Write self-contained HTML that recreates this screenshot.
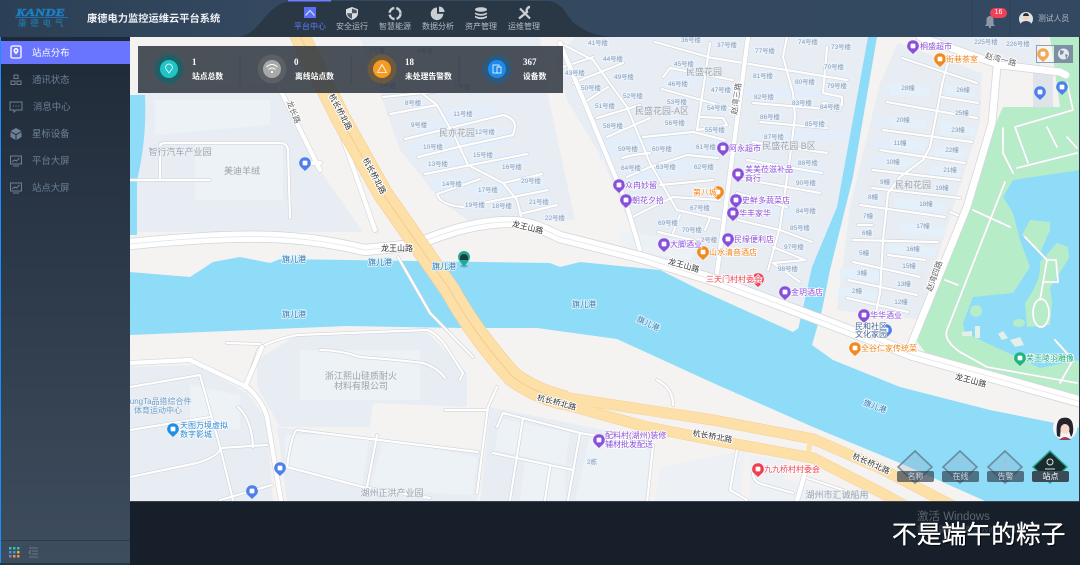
<!DOCTYPE html>
<html lang="zh-CN"><head><meta charset="utf-8"><title>康德电力监控运维云平台系统</title>
<style>
*{box-sizing:border-box;margin:0;padding:0}
html,body{width:1080px;height:565px;overflow:hidden;background:#161f2a;font-family:"Liberation Sans","Noto Sans CJK SC",sans-serif}
.a{position:absolute}
#hd{left:0;top:0;width:1080px;height:37px;background:#31465e;border-top:1px solid #1d2733}
#sb{left:0;top:37px;width:130px;height:526px;background:linear-gradient(#1f2a38,#3e4d5e);border-left:1px solid #1890ff}
.it{position:absolute;left:0;width:129px;height:24px;line-height:24px;font-size:9.4px;color:#6c8096;padding-left:31px}
.it svg{position:absolute;left:8px;top:5px}
.nav{position:absolute;top:21px;width:40px;text-align:center;font-size:8px;line-height:10px;color:#b4bbc5}
.st{position:absolute;color:#fff;font-weight:bold;white-space:nowrap}
.n{font-family:"Liberation Serif",serif;font-size:9px;top:57px}
.l{font-size:7.8px;top:71px}
.tag{position:absolute;top:471px;width:37px;height:11px;background:rgba(48,62,76,.68);border-radius:2px;color:#c9d3dc;font-size:8px;line-height:11px;text-align:center}
text{font-family:"Liberation Sans","Noto Sans CJK SC",sans-serif}
.b{font-size:6.4px;fill:#8799b3;stroke:#eaf3fc;stroke-width:2.4px;paint-order:stroke;text-anchor:middle}
.g{font-size:9px;fill:#9aa3ad;stroke:#eef2f6;stroke-width:1.5px;paint-order:stroke;text-anchor:middle}
.w{font-size:8px;fill:#3f77ad;stroke:#d8f3fd;stroke-width:1.8px;paint-order:stroke;text-anchor:middle}
.r{font-size:8px;fill:#333;stroke:#fff;stroke-width:1.8px;paint-order:stroke;text-anchor:middle}
.pu{font-size:8px;fill:#8a4fd8;stroke:#fff;stroke-width:1.5px;paint-order:stroke}
.or{font-size:8px;fill:#ef8418;stroke:#fff;stroke-width:1.5px;paint-order:stroke}
.re{font-size:8px;fill:#ef3f4f;stroke:#fff;stroke-width:1.5px;paint-order:stroke}
.bl{font-size:8px;fill:#2b86d0;stroke:#fff;stroke-width:1.5px;paint-order:stroke}
</style></head><body>

<svg class="a" style="left:130px;top:37px" width="950" height="464" viewBox="130 37 950 464">
<defs>
<g id="pin"><path d="M0,-5.8a5.8,5.8 0 0 1 4.1,9.9L0,8L-4.1,4.1A5.8,5.8 0 0 1 0,-5.8z"/><rect x="-2.4" y="-2.4" width="4.8" height="4.8" rx="1" fill="#fff"/></g>
<g id="thin" fill="none">
<path d="M130,180H210M160,180V147Q160,143 165,143H280Q287,143 288,150L290,218M363,200L377,232"/>
<path d="M130,387L200,375L220,447Q222,455 197,463L130,477M130,430L210,417M220,448L267,445M238,407Q252,420 253,447M220,500L272,485"/>
<path d="M245,387L258,350Q265,342 297,335L427,330Q435,332 445,345L463,373L460,380M320,350Q340,350 360,357Q400,360 423,363Q438,368 445,378M227,343L260,344"/>
<path d="M398,257L430,313L473,357"/>
<path d="M478,452L297,430Q292,432 287,467L363,487L430,498M377,435L367,487M497,387L488,407L477,493M445,410H488"/>
<path d="M497,427L503,413L580,433L653,445L647,503M523,418L510,500M493,453L573,470M580,433L568,500M550,467L545,500"/>
<path d="M220,447L233,500M737,450L730,490L747,500M753,473Q753,483 765,485L793,493M807,478L843,490M657,380Q673,388 673,405"/>
<path d="M383,97L433,92M390,114L437,105M423,94L437,105L455,137L468,165L503,183L517,200L522,220M405,139L503,115Q515,118 515,127L513,135L458,147L418,157M425,174L527,154M503,183L542,174M480,179L437,194Q440,205 463,207L548,190M520,214L557,205"/>
<path d="M560,43L593,60L627,107L650,163L677,210L723,220M560,68L593,57M573,83L623,63M585,102L608,87M597,118L640,105M607,137L650,118M643,137L693,132L725,140M663,77L670,68L733,80M662,89L730,108"/>
<path d="M655,42L712,58M710,43L697,130M700,117L723,118L727,125L697,130M787,37L783,57L793,93L795,117L790,157L780,227L768,270M713,58L847,80M753,103L840,110M760,122L827,128M753,142L827,153M747,160L822,173M737,178L820,193M737,193L787,207M738,220L780,230L812,242M773,247L805,260L773,263M773,263L800,282M827,47L823,93M823,93L842,97L842,105L823,103"/>
<path d="M622,158Q630,155 650,153M627,177L650,167L687,155L718,158M660,185L713,180M632,217L673,197L720,200M710,218L705,230M658,232L693,240M673,233L680,215"/>
<path d="M948,63L943,80L930,147L923,160L900,177L888,193L883,240L880,293L875,317M902,58L977,83M942,97L978,103M887,102L977,118M883,130L972,142M880,150L965,163M873,170L960,180M872,188L960,198M860,205L945,217M858,225H872M853,240L938,242M888,255L925,260M853,262L920,277M848,280L917,295M847,298L908,312M950,212L962,217"/>
</g>
<g id="park" fill="none">
<path d="M1067,83L1073,110L1015,127L1028,163M1003,128L1003,153L1013,173M1017,168L1077,153M1047,127L1057,147M1067,137L1077,148M1005,182L947,330Q943,340 960,352L987,367L1077,383M973,210L1010,227M945,280L958,285M1025,237L1047,260L1040,300M1047,260H1056L1058,282H1044M1055,340L1073,360L1060,383"/>
<ellipse cx="1041" cy="313" rx="8" ry="14"/>
</g>
</defs>

<rect x="130" y="37" width="950" height="464" fill="#f4f3f1"/>
<g fill="#e8edf4">
<path d="M137,90L277,83L320,170L363,232L137,232Z"/>
<path d="M360,37H540L548,95L575,220L470,222L440,200L400,150Z"/>
<path d="M575,37H870L838,207L812,268L802,308L722,278L640,250L603,160L567,100L555,60Z"/>
<path d="M898,43L982,73L980,123L943,240L920,320L837,310L850,207L880,83Z"/>
<path d="M880,37H1040V65L1000,62L920,37Z"/>
<path d="M130,367L197,365L247,393L267,420L273,501H130Z"/>
<path d="M297,335L427,332L467,373V407L373,403L370,427H280L257,387V360Z"/>
<path d="M277,427L483,453L477,501H287Z"/>
<path d="M490,407L653,440L647,501H480Z"/>
<path d="M660,467L745,450L740,501H655ZM750,455L785,460V480L830,490L860,501H750Z" fill="#edf0f4"/>
<path d="M1033,73H1053V113H1033Z" fill="#dfe4ea"/>
</g>
<g fill="#e3effb" opacity=".9">
<path d="M438,109L498,105V116L438,122ZM415,125L470,117V130L415,137ZM410,143L510,130V145L410,158ZM425,160L530,150V163L425,172ZM430,180L470,173V190H430ZM468,186L545,178V195H468Z"/>
<path d="M600,140L690,128V145L600,160ZM625,170L700,158V172L625,185ZM675,145L725,140V155L675,155ZM745,85L835,88V98L745,96ZM750,130L850,130V140L750,140ZM750,160L825,165V178L750,172ZM760,200L800,205V220L760,215ZM668,75L720,72V85L668,88Z"/>
<path d="M885,84L930,88V95L885,95ZM945,85L975,90V97L945,95ZM875,118L925,120V128L875,126ZM940,120L975,128V136L940,134ZM875,138L925,142V150L875,148ZM935,146L965,150V158L935,156ZM870,155L920,160V168L870,165ZM930,165L960,170V178L930,175ZM895,198L945,204V212L895,208ZM900,222L945,228V236L900,232ZM885,245L935,248V256L885,252ZM840,268L880,272V282L840,278ZM838,288L880,292V300L838,298Z"/>
<path d="M620,230L700,245L690,260L620,250ZM190,385L240,395V430L190,420ZM300,350H420V400H300ZM285,435H370L362,485L285,465ZM383,440L478,457L472,495L370,490ZM500,418L570,433L565,465L495,450ZM525,460L565,470V500H520ZM590,435L650,450L645,500H575ZM155,100H270V125L155,135ZM195,145H283V200H195Z" fill="#edf2f7"/>
</g>
<path d="M1003,107H1060L1050,37H1080V397L925,352L916,340L965,220L995,125Z" fill="#b7ecc8"/>
<path d="M1003,197L1013,180L1080,170V360L1040,368L1017,357L965,333L963,323L973,297L1013,293L1030,267L1020,240L1013,213Z" fill="#8fdcf9"/>
<path d="M1030,220L1050,222L1050,230L1040,253L1022,235ZM1057,243L1068,247L1069,258L1050,288L1052,302L1050,325L1027,327L1025,303Q1042,280 1040,262Z" fill="#b7ecc8"/>
<circle cx="976" cy="311" r="6" fill="#b7ecc8"/><ellipse cx="1019" cy="323" rx="6" ry="4" fill="#b7ecc8"/>
<path d="M962,332L972,331V336H962ZM975,326H980V338H975ZM998,334L1003,331L1008,338L1002,340ZM1010,340L1020,337L1024,345L1015,347Z" fill="#e4efe8"/>
<path d="M130,272L190,277L213,262L240,257L270,263L280,259L550,263L560,267L580,262L660,270L700,290L793,332L800,327L812,345L833,360L900,387L990,410L1080,428V501H985L900,463L813,427L713,383L617,339L537,328L463,328L347,326L130,335Z" fill="#8fdcf9"/>
<path d="M868,37L837,207L812,267L798,330L812,345L822,310L830,270L853,177L877,37Z" fill="#8fdcf9"/>
<path d="M130,95H145Q147,140 137,180V235H130Z" fill="#8fdcf9"/>
<g fill="none" stroke-linejoin="round" stroke-linecap="round">
<g stroke="#cfd3d8" stroke-width="3.4"><use href="#thin"/></g>
<g stroke="#fff" stroke-width="2.2"><use href="#thin"/></g>
<g stroke="#d6dce0" stroke-width="2.4"><use href="#park"/></g>
<g stroke="#fff" stroke-width="1.6"><use href="#park"/></g>
<g stroke="#d3d6d8" stroke-width="5.5"><path d="M277,83L320,170M305,163H320M130,363L190,360L247,387Q262,400 267,417L281,501M262,347L245,387M340,130L375,230M748,37L717,273M805,473L797,501M560,43L625,200L640,250"/></g>
<g stroke="#fff" stroke-width="4.3"><path d="M277,83L320,170M305,163H320M130,363L190,360L247,387Q262,400 267,417L281,501M262,347L245,387M340,130L375,230M748,37L717,273M805,473L797,501M560,43L625,200L640,250"/></g>
<g stroke="#d3d6d8" stroke-width="8.5"><path d="M920,37L1000,65L1060,72L1066,75M997,67L992,123L967,207L913,340L909,352"/></g>
<g stroke="#fff" stroke-width="7"><path d="M920,37L1000,65L1060,72L1066,75M997,67L992,123L967,207L913,340L909,352"/></g>
<g stroke="#d1d4d8" stroke-width="12"><path d="M130,244C250,232 300,235 365,250L415,245C450,230 480,222 510,222C530,222 545,230 560,237L643,258L720,282L800,312L913,355L1085,403"/></g>
<g stroke="#fff" stroke-width="10.5"><path d="M130,244C250,232 300,235 365,250L415,245C450,230 480,222 510,222C530,222 545,230 560,237L643,258L720,282L800,312L913,355L1085,403"/></g>
<path d="M130,244C250,232 300,235 365,250L415,245C450,230 480,222 510,222C530,222 545,230 560,237L643,258L720,282L800,312L913,355L1085,403" stroke="#dfe2e5" stroke-width=".7"/>
<g stroke="#f6cc92" stroke-width="20"><path d="M297,30L340,117L383,194L450,290Q475,335 513,377Q535,393 563,400"/></g>
<g stroke="#f6cc92" stroke-width="11"><path d="M563,397L647,410L713,420L813,439L880,468L970,515M563,404L647,427L713,440L813,458L880,492L930,520"/></g>
<g stroke="#fde0a8" stroke-width="18.800"><path d="M297,30L340,117L383,194L450,290Q475,335 513,377Q535,393 563,400"/></g>
<g stroke="#fde0a8" stroke-width="10"><path d="M563,397L647,410L713,420L813,439L880,468L970,515M563,404L647,427L713,440L813,458L880,492L930,520"/></g>
<path d="M297,30L340,117L383,194L450,290Q475,335 513,377Q535,393 563,400" stroke="#f5c689" stroke-width=".8"/>
<path d="M810,441L808,456" stroke="#fde0a8" stroke-width="5"/>
</g>

<text class="g" x="180" y="155">智行汽车产业园</text><text class="g" x="242" y="174">美迪羊绒</text>
<text class="g" x="457" y="136">民亦花园</text><text class="g" x="704" y="75">民盛花园</text><text class="g" x="662" y="114">民盛花园-A区</text><text class="g" x="789" y="149">民盛花园 B区</text><text class="g" x="913" y="188">民和花园</text>
<text class="g" x="361" y="379">浙江熙山硅质耐火</text><text class="g" x="361" y="389">材料有限公司</text>
<text class="g" x="392" y="496">湖州正洪产业园</text><text class="g" x="837" y="498">湖州市汇诚船用</text>
<text class="g" style="font-size:8px;fill:#6fa0c8" x="158" y="404">KungTa品搭综合件</text><text class="g" style="font-size:8px;fill:#6fa0c8" x="158" y="413">体育运动中心</text>

<g>
<text class="b" x="377" y="52">1号楼</text><text class="b" x="425" y="53">4号楼</text><text class="b" x="388" y="88">5号楼</text><text class="b" x="462" y="89">7号楼</text><text class="b" x="413" y="105">8号楼</text><text class="b" x="419" y="127">9号楼</text><text class="b" x="463" y="116">11号楼</text><text class="b" x="485" y="134">12号楼</text><text class="b" x="433" y="149">10号楼</text><text class="b" x="483" y="157">15号楼</text><text class="b" x="438" y="166">13号楼</text><text class="b" x="512" y="169">16号楼</text><text class="b" x="452" y="186">14号楼</text><text class="b" x="488" y="192">17号楼</text><text class="b" x="531" y="183">20号楼</text><text class="b" x="475" y="207">19号楼</text><text class="b" x="502" y="208">18号楼</text><text class="b" x="539" y="204">21号楼</text><text class="b" x="555" y="220">22号楼</text>
<text class="b" x="598" y="45">41号楼</text><text class="b" x="613" y="61">44号楼</text><text class="b" x="575" y="75">43号楼</text><text class="b" x="624" y="79">49号楼</text><text class="b" x="591" y="90">50号楼</text><text class="b" x="633" y="98">52号楼</text><text class="b" x="605" y="108">51号楼</text><text class="b" x="677" y="104">53号楼</text><text class="b" x="613" y="128">58号楼</text><text class="b" x="675" y="125">56号楼</text><text class="b" x="717" y="110">54号楼</text><text class="b" x="715" y="132">55号楼</text><text class="b" x="684" y="66">45号楼</text><text class="b" x="678" y="86">46号楼</text><text class="b" x="721" y="92">47号楼</text><text class="b" x="691" y="42">36号楼</text><text class="b" x="727" y="47">37号楼</text><text class="b" x="765" y="53">77号楼</text><text class="b" x="808" y="44">74号楼</text><text class="b" x="841" y="49">73号楼</text><text class="b" x="834" y="69">70号楼</text><text class="b" x="763" y="78">81号楼</text><text class="b" x="805" y="84">80号楼</text><text class="b" x="837" y="88">79号楼</text><text class="b" x="764" y="99">82号楼</text><text class="b" x="802" y="105">83号楼</text><text class="b" x="830" y="109">84号楼</text><text class="b" x="770" y="119">86号楼</text><text class="b" x="815" y="126">85号楼</text><text class="b" x="774" y="139">87号楼</text><text class="b" x="628" y="151">59号楼</text><text class="b" x="662" y="151">60号楼</text><text class="b" x="706" y="149">61号楼</text><text class="b" x="631" y="170">64号楼</text><text class="b" x="666" y="169">63号楼</text><text class="b" x="704" y="169">62号楼</text><text class="b" x="808" y="165">88号楼</text><text class="b" x="806" y="185">90号楼</text><text class="b" x="806" y="213">84号楼</text><text class="b" x="800" y="230">85号楼</text><text class="b" x="794" y="249">97号楼</text><text class="b" x="788" y="271">98号楼</text><text class="b" x="700" y="210">67号楼</text><text class="b" x="668" y="225">69号楼</text><text class="b" x="692" y="232">70号楼</text><text class="b" x="709" y="242">2号楼</text>
<text class="b" x="986" y="44">225号楼</text><text class="b" x="1018" y="46">226号楼</text>
<text class="b" x="908" y="90">28幢</text><text class="b" x="963" y="92">26幢</text><text class="b" x="962" y="115">25幢</text><text class="b" x="903" y="122">20幢</text><text class="b" x="958" y="132">23幢</text><text class="b" x="900" y="145">11幢</text><text class="b" x="952" y="152">22幢</text><text class="b" x="893" y="164">10幢</text><text class="b" x="950" y="172">21幢</text><text class="b" x="885" y="184">9幢</text><text class="b" x="942" y="190">19幢</text><text class="b" x="873" y="199">8幢</text><text class="b" x="926" y="206">18幢</text><text class="b" x="868" y="218">7幢</text><text class="b" x="923" y="228">17幢</text><text class="b" x="867" y="235">6幢</text><text class="b" x="913" y="251">16幢</text><text class="b" x="864" y="255">5幢</text><text class="b" x="909" y="268">15幢</text><text class="b" x="862" y="275">3幢</text><text class="b" x="904" y="286">13幢</text><text class="b" x="857" y="293">2幢</text><text class="b" x="901" y="304">12幢</text>
<text class="b" x="592" y="464">2栋</text>
</g>

<text class="w" x="294" y="262">旗儿港</text><text class="w" x="380" y="265">旗儿港</text><text class="w" x="444" y="269">旗儿港</text><text class="w" x="294" y="317">旗儿港</text><text class="w" x="584" y="307">旗儿港</text>
<text class="w" transform="translate(647,326) rotate(25)">旗儿港</text><text class="w" transform="translate(874,409) rotate(20)">旗儿港</text>

<text class="r" x="397" y="251">龙王山路</text>
<text class="r" transform="translate(527,230) rotate(14)">龙王山路</text>
<text class="r" transform="translate(683,268) rotate(16)">龙王山路</text>
<text class="r" transform="translate(970,383) rotate(15)">龙王山路</text>
<text class="r" transform="translate(338,113) rotate(62)">杭长桥北路</text>
<text class="r" transform="translate(372,177) rotate(62)">杭长桥北路</text>
<text class="r" transform="translate(556,405) rotate(15)">杭长桥北路</text>
<text class="r" transform="translate(712,439) rotate(10)">杭长桥北路</text>
<text class="r" transform="translate(870,466) rotate(24)">杭长桥北路</text>
<text class="r" transform="translate(291,113) rotate(68)" style="fill:#666">龙长路</text>
<text class="r" transform="translate(739,99) rotate(-82)" style="fill:#666">赵湾三路</text>
<text class="r" transform="translate(1000,62) rotate(15)" style="fill:#666">赵湾一路</text>
<text class="r" transform="translate(937,277) rotate(-70)" style="fill:#666">赵湾四路</text>

<g fill="#8a4fd8">
<use href="#pin" x="913" y="46"/><use href="#pin" x="723" y="148"/><use href="#pin" x="738" y="174"/><use href="#pin" x="619" y="185"/><use href="#pin" x="626" y="200"/><use href="#pin" x="736" y="200"/><use href="#pin" x="733" y="213"/><use href="#pin" x="728" y="239"/><use href="#pin" x="664" y="244"/><use href="#pin" x="785" y="292"/><use href="#pin" x="864" y="315"/><use href="#pin" x="599" y="440"/>
</g>
<g fill="#f08a1d">
<use href="#pin" x="940" y="59"/><use href="#pin" x="718" y="192"/><use href="#pin" x="703" y="252"/><use href="#pin" x="855" y="348"/><use href="#pin" x="1043" y="54"/>
</g>
<g fill="#ef3f4f"><use href="#pin" x="758" y="279"/><use href="#pin" x="758" y="469"/></g>
<g fill="#4f7fe8"><use href="#pin" x="305" y="163"/><use href="#pin" x="280" y="468"/><use href="#pin" x="252" y="491"/><use href="#pin" x="1040" y="92"/><use href="#pin" x="1062" y="87"/><use href="#pin" x="886" y="330"/></g>
<use href="#pin" x="173" y="429" fill="#1e8fe6"/>
<use href="#pin" x="1020" y="358" fill="#1eb482"/>
<text class="pu" x="920" y="49">桐盛超市</text><text class="or" x="946" y="62">街巷茶室</text>
<text class="pu" x="729" y="151">阿永超市</text><text class="pu" x="745" y="172">美美莅滋补品</text><text class="pu" x="745" y="181">商行</text>
<text class="pu" x="625" y="188">众冉妙留</text><text class="pu" x="632" y="203">朝花夕拾</text><text class="or" x="693" y="195">第八城</text>
<text class="pu" x="742" y="203">史鲜多蔬菜店</text><text class="pu" x="739" y="216">华丰家华</text><text class="pu" x="734" y="242">民缘便利店</text><text class="pu" x="670" y="247">大脚酒业</text>
<text class="or" x="709" y="255">山水清音酒店</text><text class="re" x="706" y="282">三天门村村委会</text><text class="pu" x="791" y="295">金玥酒店</text>
<text class="pu" x="870" y="318">华华酒业</text><text class="or" x="861" y="351">全谷仁家传统菜</text>
<text x="855" y="329" style="font-size:8px;fill:#3f5f90;stroke:#fff;stroke-width:1.4px;paint-order:stroke">民和社区</text>
<text x="855" y="337" style="font-size:8px;fill:#3f5f90;stroke:#fff;stroke-width:1.4px;paint-order:stroke">文化家园</text>
<text x="1026" y="361" style="font-size:8px;fill:#17a878;stroke:#fff;stroke-width:1.4px;paint-order:stroke">荣王陵羽雕像</text>
<text class="pu" x="605" y="438">配料村(湖州)装修</text><text class="pu" x="605" y="447">辅材批发配送</text>
<text class="re" x="764" y="472">九九桥村村委会</text>
<text class="bl" x="180" y="428">天图万境虚拟</text><text class="bl" x="180" y="437">数字影城</text>

<ellipse cx="464" cy="266" rx="4" ry="1.5" fill="#5a8fa8" opacity=".6"/>
<path d="M464,251a6,6 0 0 1 6,6c0,4 -4,6 -6,10c-2,-4 -6,-6 -6,-10a6,6 0 0 1 6,-6z" fill="#1fa98f"/>
<path d="M460,258a4,4 0 0 1 8,0v2h-8z" fill="#1d3c42"/>

<rect x="1036.5" y="45.5" width="18" height="17" fill="rgba(255,255,255,.25)" stroke="#8ea0b6"/>
<rect x="1054" y="45" width="19" height="18" fill="#7e8ea3"/>
<circle cx="1063.5" cy="54" r="5.5" fill="#e4e9ee"/>
<path d="M1060,50l4,1l-1,3l-3,1zM1065,54l3,1l-2,4z" fill="#7e8ea3"/>

<circle cx="1065" cy="428" r="12" fill="#f6f6f8"/>
<path d="M1057,436Q1055,420 1062,418Q1072,416 1073,426Q1074,433 1071,437L1068,428L1061,427L1060,437Z" fill="#26242a"/>
<ellipse cx="1065" cy="429" rx="4.5" ry="5" fill="#f7d9cc"/>
<path d="M1059,440Q1065,434 1071,440L1069,440H1061Z" fill="#9a4056"/>

<g fill="rgba(120,150,170,.2)" stroke="rgba(95,115,130,.75)" stroke-width="1.6">
<path d="M915,451L932,467L915,483L898,467Z"/><path d="M960,451L977,467L960,483L943,467Z"/><path d="M1005,451L1022,467L1005,483L988,467Z"/>
</g>
<path d="M1050,451L1067,467L1050,483L1033,467Z" fill="#1b2c2f" stroke="#27a98f" stroke-width="1.4"/>
<g fill="none" stroke="#aac0d4" stroke-width=".8">
<rect x="910" y="459" width="11" height="8"/><path d="M954,461q6,-5 12,0M956,464q4,-3 8,0M1000,468h10M1002,468l3,-9l3,9"/></g>
<circle cx="1050" cy="462" r="3" fill="none" stroke="#d6e4e4"/><path d="M1045,469h10" stroke="#d6e4e4"/>
</svg>

<div class="a" style="left:138px;top:46px;width:425px;height:47px;background:rgba(47,53,63,.86)"></div>
<svg class="a" style="left:138px;top:46px" width="425" height="47" viewBox="138 46 425 47">
<path d="M240,55V85M351,55V85M459,55V85" stroke="#3b4656" stroke-width="1"/>
<circle cx="169" cy="69" r="14.5" fill="#1f5f66"/><circle cx="169" cy="69" r="9" fill="#1fc4c6"/>
<path d="M169,64a3.4,3.4 0 0 1 3.4,3.4c0,2.2 -2,3.4 -3.4,5.6c-1.4,-2.2 -3.4,-3.4 -3.4,-5.6a3.4,3.4 0 0 1 3.4,-3.4z" fill="none" stroke="#fff" stroke-width=".8"/>
<circle cx="272" cy="69" r="14.5" fill="#5b5f66"/><circle cx="272" cy="69" r="9" fill="#a8a8a8"/>
<path d="M266.5,67q5.5,-5 11,0M268.5,69.5q3.5,-3 7,0" fill="none" stroke="#fff" stroke-width="1"/><circle cx="272" cy="72" r="1.1" fill="#fff"/>
<circle cx="382" cy="69" r="14.5" fill="#6d5a3c"/><circle cx="382" cy="69" r="9" fill="#f59a23"/>
<path d="M382,64.5L386.5,72.5H377.5Z" fill="none" stroke="#fff" stroke-width=".8"/>
<circle cx="497" cy="69" r="14.5" fill="#2d5a7c"/><circle cx="497" cy="69" r="9" fill="#1a8cf0"/>
<rect x="493" y="65" width="6" height="8" fill="none" stroke="#fff" stroke-width=".8"/><rect x="497" y="67" width="4" height="6" fill="#1a8cf0" stroke="#fff" stroke-width=".8"/>
</svg>
<div class="st n" style="left:192px">1</div><div class="st l" style="left:192px">站点总数</div>
<div class="st n" style="left:294px">0</div><div class="st l" style="left:295px">离线站点数</div>
<div class="st n" style="left:405px">18</div><div class="st l" style="left:405px">未处理告警数</div>
<div class="st n" style="left:523px">367</div><div class="st l" style="left:523px">设备数</div>

<div class="tag" style="left:897px">名称</div><div class="tag" style="left:942px">在线</div><div class="tag" style="left:987px">告警</div>
<div class="tag" style="left:1032px;background:#3b4c59;color:#fff">站点</div>

<div class="a" id="hd">
<svg class="a" style="left:0;top:-1px" width="1080" height="37" viewBox="0 0 1080 37">
<defs><linearGradient id="hg" x1="0" x2="1"><stop offset="0" stop-color="#2b3f55"/><stop offset=".25" stop-color="#34495f"/><stop offset="1" stop-color="#334961"/></linearGradient></defs>
<rect width="1080" height="37" fill="url(#hg)"/>
<path d="M238,37C262,34 265,3 292,1L548,1C566,3 565,18 578,26C590,34 600,36 612,37Z" fill="#2a3745"/>
<rect x="288" y="0" width="43" height="1.5" fill="#6f7dff"/>
<path d="M972,0V37M1010,0V37" stroke="#2f4258"/>
<text x="16" y="16" textLength="49" lengthAdjust="spacingAndGlyphs" style="font:italic bold 10.5px 'Liberation Serif',serif;fill:#1d7fc4;stroke:#1d7fc4;stroke-width:.5px">KANDE</text>
<path d="M15,17.5H68" stroke="#1d7fc4" stroke-width=".8"/>
<rect x="304" y="7" width="12" height="11" fill="#5b6ff5"/><path d="M305.500,15.500l4.500,-5l4.500,5" fill="none" stroke="#d5dcff" stroke-width="1.200"/>
<path d="M352,7l6,2.200v3.800c0,3.500 -2.500,5.500 -6,7c-3.500,-1.500 -6,-3.500 -6,-7v-3.800z" fill="#d8dde2"/><path d="M352,8.500l4.800,1.700v3h-4.800zM352,13.200h-4.800c0,2.800 2,4.500 4.800,5.500z" fill="#2a3745" opacity=".8"/>
<circle cx="395" cy="13.500" r="5.500" fill="none" stroke="#c9ced4" stroke-width="2.500" stroke-dasharray="7 2"/>
<path d="M437,7.500a6.300,6.300 0 1 0 6.300,6.300h-6.300z" fill="#c9ced4"/><path d="M439,6.500a5.500,5.500 0 0 1 5.500,5.500h-5.500z" fill="#c9ced4"/>
<ellipse cx="481" cy="9.500" rx="6" ry="2.300" fill="#c9ced4"/><path d="M475,12.500q6,3 12,0v1.800q-6,3 -12,0zM475,15.800q6,3 12,0v1.800q-6,3 -12,0z" fill="#c9ced4"/>
<path d="M520,8.500l10,10" stroke="#c9ced4" stroke-width="2.200" fill="none"/>
<path d="M530,7a3.500,3.500 0 0 0 -3,5l-8,6.500" stroke="#c9ced4" stroke-width="2.400" fill="none"/>
<path d="M990,16a3.500,3.500 0 0 1 3.500,3.500v4.500l1.500,2h-10l1.500,-2v-4.500a3.500,3.500 0 0 1 3.500,-3.500z" fill="#8d98a6"/><circle cx="990" cy="27" r="1.200" fill="#8d98a6"/>
<rect x="990" y="8" width="17" height="10" rx="5" fill="#ef4258"/>
<circle cx="1026" cy="19" r="7" fill="#dfe3e8"/><circle cx="1026" cy="17" r="3" fill="#f2cfb5"/><path d="M1023,16a3,3 0 0 1 6,0z" fill="#2c2c30"/><path d="M1020.500,24a6,5 0 0 1 11,0a7,7 0 0 1 -11,0z" fill="#33445c"/>
</svg>
<div class="a" style="left:18px;top:18px;width:48px;font-size:8.5px;line-height:9px;color:#1f82b4;letter-spacing:3.800px;white-space:nowrap">康德电气</div>
<div class="a" style="left:87px;top:12px;font-size:10.250px;line-height:13px;font-weight:bold;color:#eef1f5;white-space:nowrap">康德电力监控运维云平台系统</div>
<div class="nav" style="left:290px;color:#5b7fff">平台中心</div>
<div class="nav" style="left:332px">安全运行</div>
<div class="nav" style="left:375px">智慧能源</div>
<div class="nav" style="left:418px">数据分析</div>
<div class="nav" style="left:461px">资产管理</div>
<div class="nav" style="left:504px">运维管理</div>
<div class="a" style="left:990px;top:7px;width:17px;text-align:center;font-size:7px;line-height:10px;color:#fff">16</div>
<div class="a" style="left:1038px;top:13px;font-size:7.800px;line-height:10px;color:#b4bbc5;white-space:nowrap">测试人员</div>
</div>

<div class="a" id="sb">
<div class="a" style="left:0;top:4px;width:129px;height:23px;background:#6a75ff"></div>
<div class="it" style="top:4px;color:#fff;height:23px;line-height:23px">
<svg width="14" height="14" viewBox="0 0 14 14" style="top:4px"><rect x="2" y="1" width="10" height="12" rx="1.500" fill="none" stroke="#fff" stroke-width="1.300"/><path d="M7,3a2.500,2.500 0 0 1 2.500,2.500c0,1.500 -1.500,2.500 -2.500,4c-1,-1.500 -2.500,-2.500 -2.500,-4a2.500,2.500 0 0 1 2.500,-2.500z" fill="#fff"/><circle cx="7" cy="5.500" r="1" fill="#6a75ff"/></svg>站点分布</div>
<div class="it" style="top:31px"><svg width="14" height="14" viewBox="0 0 14 14"><path d="M5,2h4v3.500h-4zM2,8h4v3.500h-4zM8,8h4v3.500h-4z" fill="none" stroke="#6c8096"/></svg>通讯状态</div>
<div class="it" style="top:58px;padding-left:32px"><svg width="14" height="14" viewBox="0 0 14 14"><path d="M1,2h12v8h-6l-2,2v-2h-4z" fill="none" stroke="#6c8096"/><path d="M4,6h1M6.500,6h1M9,6h1" stroke="#6c8096"/></svg>消息中心</div>
<div class="it" style="top:85px"><svg width="14" height="14" viewBox="0 0 14 14"><path d="M7,1l5.500,3L7,7L1.500,4zM1.500,5L6.500,8V13L1.500,10zM12.500,5L7.500,8V13L12.500,10z" fill="#6c8096"/></svg>星标设备</div>
<div class="it" style="top:112px"><svg width="14" height="14" viewBox="0 0 14 14"><rect x="1.500" y="2" width="11" height="8" fill="none" stroke="#6c8096"/><path d="M3,8l2.500,-2l2,1l3,-3M4,12h6" fill="none" stroke="#6c8096"/></svg>平台大屏</div>
<div class="it" style="top:139px"><svg width="14" height="14" viewBox="0 0 14 14"><rect x="1.500" y="2" width="11" height="8" fill="none" stroke="#6c8096"/><path d="M3,8l2.500,-2l2,1l3,-3M4,12h6" fill="none" stroke="#6c8096"/></svg>站点大屏</div>
<div class="a" style="left:0;top:503px;width:129px;height:1px;background:#2f3c4b"></div>
<svg class="a" style="left:7px;top:509px" width="34" height="12" viewBox="0 0 34 12">
<rect x="1" y="1" width="2.500" height="2.500" fill="#35c0a8"/><rect x="5" y="1" width="2.500" height="2.500" fill="#35c0a8"/><rect x="9" y="1" width="2.500" height="2.500" fill="#35c0a8"/><rect x="1" y="5" width="2.500" height="2.500" fill="#2f9fd8"/><rect x="5" y="5" width="2.500" height="2.500" fill="#2f9fd8"/><rect x="9" y="5" width="2.500" height="2.500" fill="#e8b13a"/><rect x="1" y="9" width="2.500" height="2.500" fill="#9a6fd0"/><rect x="5" y="9" width="2.500" height="2.500" fill="#e89a3a"/><rect x="9" y="9" width="2.500" height="2.500" fill="#e89a3a"/>
<path d="M21,2h9M24,5h6M24,8h6M21,11h9M23,4l-2,2.500l2,2" fill="none" stroke="#76869a" stroke-width=".8"/>
</svg>
</div>

<div class="a" style="left:130px;top:501px;width:950px;height:64px;background:#161f2a;border-top:1.500px solid #3a434e"></div>
<div class="a" style="left:0;top:563px;width:130px;height:2px;background:#1f3a46"></div>
<div class="a" style="left:1079px;top:37px;width:1px;height:465px;background:#2a3440"></div>
<div class="a" style="left:917px;top:510px;font-size:11.500px;line-height:14px;color:#5c6570;white-space:nowrap">激活 Windows</div>
<div class="a" style="left:917px;top:524px;font-size:8px;line-height:11px;color:#3f4853;white-space:nowrap">转到"设置"以激活 Windows。</div>
<div class="a" style="left:892px;top:521px;font-size:24.800px;line-height:30px;color:#fff;white-space:nowrap;text-shadow:1px 1px 1px #000;-webkit-text-stroke:.3px #fff">不是端午的粽子</div>
</body></html>
